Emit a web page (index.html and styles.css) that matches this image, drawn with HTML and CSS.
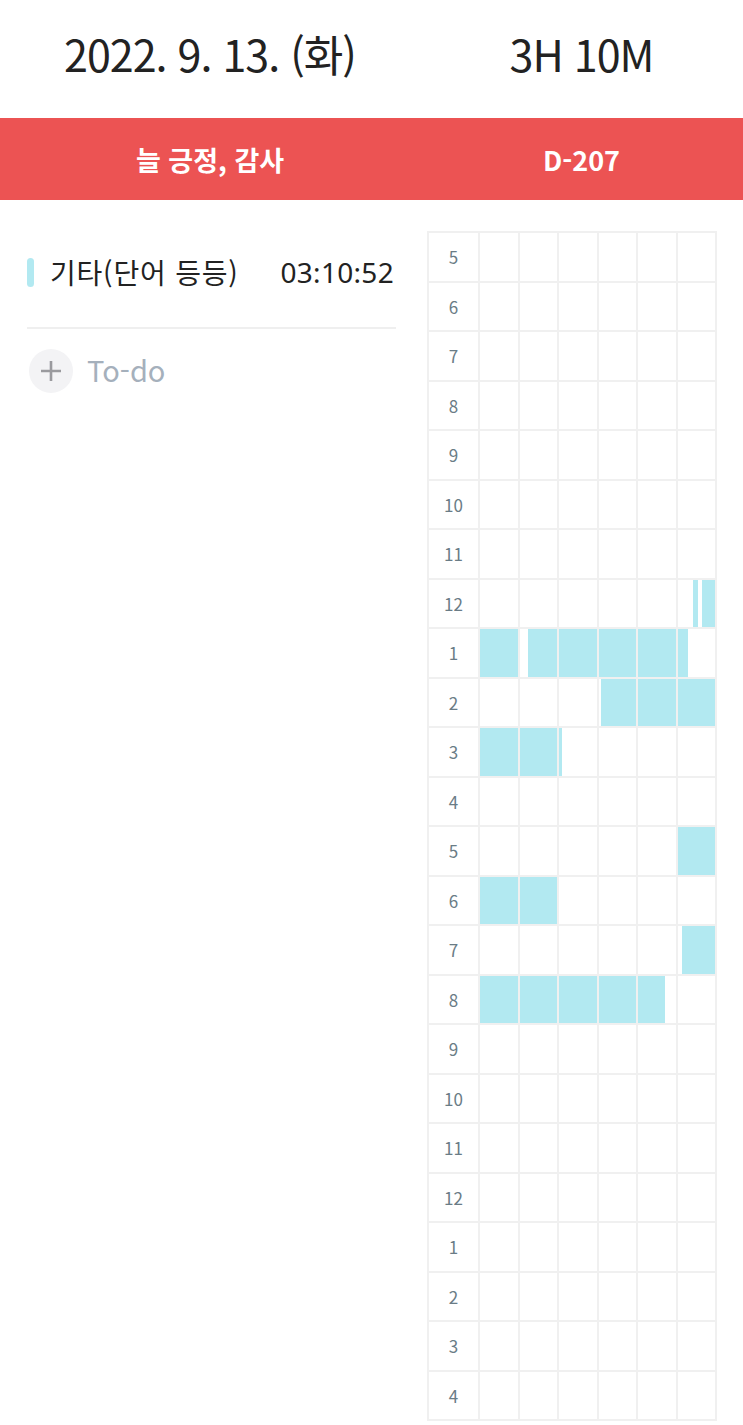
FILE: index.html
```html
<!DOCTYPE html>
<html lang="ko">
<head>
    <meta charset="UTF-8">
    <meta name="viewport" content="width=device-width, initial-scale=1.0">
    <title>Study Planner</title>
    <link rel="stylesheet" href="styles.css">
</head>
<body>

    <!-- Date / total time -->
    <div class="top">
        <div class="half left-half date">2022. 9. 13. (화)</div>
        <div class="half right-half total">3H 10M</div>
    </div>

    <!-- Motto / d-day bar -->
    <div class="banner">
        <div class="half left-half">늘 긍정, 감사</div>
        <div class="half right-half">D-207</div>
    </div>

    <div class="main">
        <!-- Subjects and todos -->
        <div class="tasks">
            <div class="task">
                <span class="task-mark"></span>
                <span class="task-name">기타(단어 등등)</span>
                <span class="task-time">03:10:52</span>
            </div>
            <div class="todo">
                <span class="todo-btn">
                    <svg width="24" height="24" viewBox="0 0 24 24"><path d="M12 2v20M2 12h20" stroke="#9a9a9e" stroke-width="2.6" fill="none"/></svg>
                </span>
                <span class="todo-text">To-do</span>
            </div>
        </div>

        <!-- Timetable -->
        <div class="timetable">
            <div class="hour">5</div><div class="cell"></div><div class="cell"></div><div class="cell"></div><div class="cell"></div><div class="cell"></div><div class="cell"></div>
            <div class="hour">6</div><div class="cell"></div><div class="cell"></div><div class="cell"></div><div class="cell"></div><div class="cell"></div><div class="cell"></div>
            <div class="hour">7</div><div class="cell"></div><div class="cell"></div><div class="cell"></div><div class="cell"></div><div class="cell"></div><div class="cell"></div>
            <div class="hour">8</div><div class="cell"></div><div class="cell"></div><div class="cell"></div><div class="cell"></div><div class="cell"></div><div class="cell"></div>
            <div class="hour">9</div><div class="cell"></div><div class="cell"></div><div class="cell"></div><div class="cell"></div><div class="cell"></div><div class="cell"></div>
            <div class="hour">10</div><div class="cell"></div><div class="cell"></div><div class="cell"></div><div class="cell"></div><div class="cell"></div><div class="cell"></div>
            <div class="hour">11</div><div class="cell"></div><div class="cell"></div><div class="cell"></div><div class="cell"></div><div class="cell"></div><div class="cell"></div>
            <div class="hour">12</div><div class="cell"></div><div class="cell"></div><div class="cell"></div><div class="cell"></div><div class="cell"></div><div class="cell"><span class="fill" style="left:42%;width:13%"></span><span class="fill" style="left:64%;width:36%"></span></div>
            <div class="hour">1</div><div class="cell"><span class="fill"></span></div><div class="cell"><span class="fill" style="left:23%;width:77%"></span></div><div class="cell"><span class="fill"></span></div><div class="cell"><span class="fill"></span></div><div class="cell"><span class="fill"></span></div><div class="cell"><span class="fill" style="width:28%"></span></div>
            <div class="hour">2</div><div class="cell"></div><div class="cell"></div><div class="cell"></div><div class="cell"><span class="fill" style="left:7%;width:93%"></span></div><div class="cell"><span class="fill"></span></div><div class="cell"><span class="fill"></span></div>
            <div class="hour">3</div><div class="cell"><span class="fill"></span></div><div class="cell"><span class="fill"></span></div><div class="cell"><span class="fill" style="width:8%"></span></div><div class="cell"></div><div class="cell"></div><div class="cell"></div>
            <div class="hour">4</div><div class="cell"></div><div class="cell"></div><div class="cell"></div><div class="cell"></div><div class="cell"></div><div class="cell"></div>
            <div class="hour">5</div><div class="cell"></div><div class="cell"></div><div class="cell"></div><div class="cell"></div><div class="cell"></div><div class="cell"><span class="fill"></span></div>
            <div class="hour">6</div><div class="cell"><span class="fill"></span></div><div class="cell"><span class="fill"></span></div><div class="cell"></div><div class="cell"></div><div class="cell"></div><div class="cell"></div>
            <div class="hour">7</div><div class="cell"></div><div class="cell"></div><div class="cell"></div><div class="cell"></div><div class="cell"></div><div class="cell"><span class="fill" style="left:11%;width:89%"></span></div>
            <div class="hour">8</div><div class="cell"><span class="fill"></span></div><div class="cell"><span class="fill"></span></div><div class="cell"><span class="fill"></span></div><div class="cell"><span class="fill"></span></div><div class="cell"><span class="fill" style="width:73%"></span></div><div class="cell"></div>
            <div class="hour">9</div><div class="cell"></div><div class="cell"></div><div class="cell"></div><div class="cell"></div><div class="cell"></div><div class="cell"></div>
            <div class="hour">10</div><div class="cell"></div><div class="cell"></div><div class="cell"></div><div class="cell"></div><div class="cell"></div><div class="cell"></div>
            <div class="hour">11</div><div class="cell"></div><div class="cell"></div><div class="cell"></div><div class="cell"></div><div class="cell"></div><div class="cell"></div>
            <div class="hour">12</div><div class="cell"></div><div class="cell"></div><div class="cell"></div><div class="cell"></div><div class="cell"></div><div class="cell"></div>
            <div class="hour">1</div><div class="cell"></div><div class="cell"></div><div class="cell"></div><div class="cell"></div><div class="cell"></div><div class="cell"></div>
            <div class="hour">2</div><div class="cell"></div><div class="cell"></div><div class="cell"></div><div class="cell"></div><div class="cell"></div><div class="cell"></div>
            <div class="hour">3</div><div class="cell"></div><div class="cell"></div><div class="cell"></div><div class="cell"></div><div class="cell"></div><div class="cell"></div>
            <div class="hour">4</div><div class="cell"></div><div class="cell"></div><div class="cell"></div><div class="cell"></div><div class="cell"></div><div class="cell"></div>
        </div>
    </div>

</body>
</html>
```

FILE: styles.css
```css
/* General styles */
body {
    font-family: 'Noto Sans CJK KR', 'Noto Sans', sans-serif;
    margin: 0;
    padding: 0;
    background-color: #ffffff;
    color: #222;
}

/* Header rows: left half is 420px wide */
.top, .banner {
    display: flex;
}
.half {
    display: flex;
    align-items: center;
    justify-content: center;
}
.left-half {
    width: 420px;
}
.right-half {
    flex: 1;
}

.top {
    height: 118px;
}
.date, .total {
    font-size: 43px;
    letter-spacing: -1px;
    color: #222;
    padding-bottom: 12px;
}

.banner {
    height: 82px;
    background-color: #ec5353;
    color: white;
    font-size: 27px;
    font-weight: bold;
}

/* Main area */
.main {
    display: flex;
}
.tasks {
    width: 369px;
    padding: 0 24px 0 27px;
}
.task {
    display: flex;
    align-items: center;
    height: 56px;
    margin-top: 44px;
    border-bottom: 2px solid #efefef;
    padding-bottom: 27px;
}
.task-mark {
    width: 7px;
    height: 29px;
    border-radius: 4px;
    background-color: #b2e9f1;
    margin-right: 16px;
}
.task-name {
    flex: 1;
    font-size: 28px;
    letter-spacing: 0.8px;
    color: #222;
}
.task-time {
    font-family: 'Noto Sans', 'Noto Sans CJK KR', sans-serif;
    font-size: 28px;
    letter-spacing: 0.3px;
    color: #222;
    margin-right: 2px;
}

.todo {
    display: flex;
    align-items: center;
    margin-top: 20px;
}
.todo-btn {
    width: 44px;
    height: 44px;
    border-radius: 50%;
    background-color: #f3f3f5;
    display: flex;
    align-items: center;
    justify-content: center;
    margin-left: 2px;
    margin-right: 14px;
}
.todo-text {
    font-size: 29px;
    color: #a5b0bc;
    margin-top: -4px;
}

/* Timetable */
.timetable {
    margin: 31px 0 0 7px;
    width: 286px;
    display: grid;
    grid-template-columns: 49px repeat(6, 1fr);
    grid-auto-rows: 47.5px;
    gap: 2px;
    padding: 2px;
    background-color: #f0f0f0;
}
.hour {
    background-color: white;
    display: flex;
    align-items: center;
    justify-content: center;
    font-size: 17px;
    color: #6a7c86;
}
.cell {
    background-color: white;
    position: relative;
}
.fill {
    position: absolute;
    top: 0;
    bottom: 0;
    left: 0;
    width: 100%;
    background-color: #b2e9f1;
}
```
